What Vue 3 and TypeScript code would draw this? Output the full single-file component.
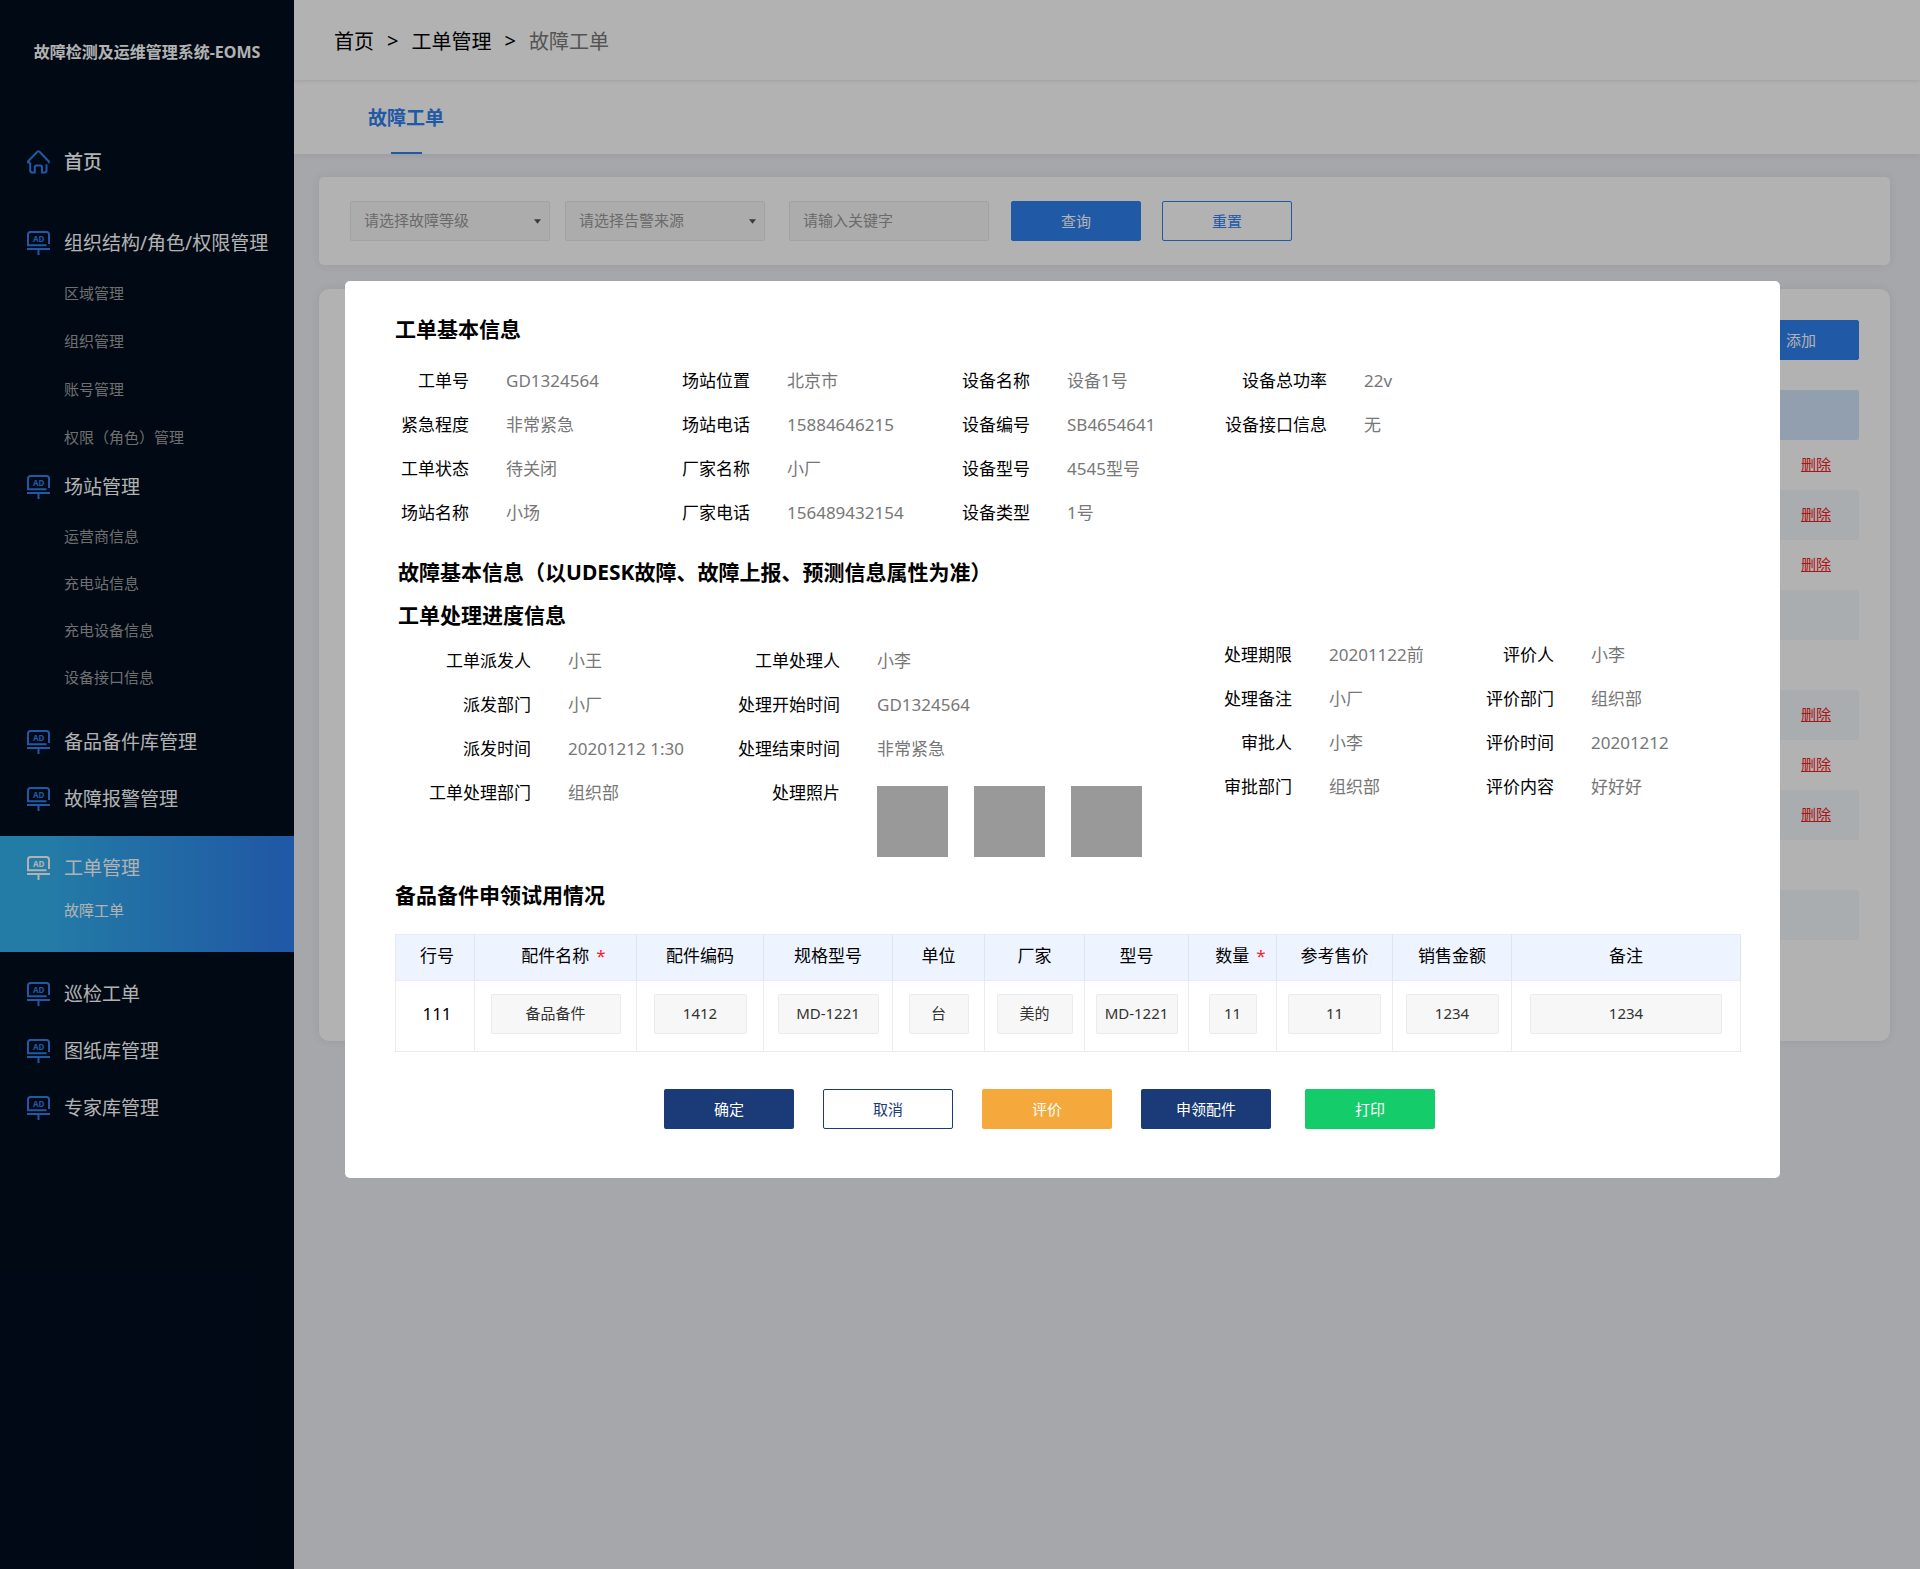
<script setup lang="ts">
import { ref } from 'vue'

interface NavGroup {
  title: string
  icon: 'home' | 'board'
  kind?: 'first' | 'tight' | 'active'
  children?: string[]
}

interface Field {
  label: string
  value?: string
  photos?: number
}

interface PartColumn {
  title: string
  width: number
  required?: boolean
  field?: number
  value: string
}

const navGroups: NavGroup[] = [
  { title: '首页', icon: 'home', kind: 'first' },
  { title: '组织结构/角色/权限管理', icon: 'board', children: ['区域管理', '组织管理', '账号管理', '权限（角色）管理'] },
  { title: '场站管理', icon: 'board', kind: 'tight', children: ['运营商信息', '充电站信息', '充电设备信息', '设备接口信息'] },
  { title: '备品备件库管理', icon: 'board' },
  { title: '故障报警管理', icon: 'board' },
  { title: '工单管理', icon: 'board', kind: 'active', children: ['故障工单'] },
  { title: '巡检工单', icon: 'board' },
  { title: '图纸库管理', icon: 'board' },
  { title: '专家库管理', icon: 'board' },
]

const basicInfo: Field[][] = [
  [
    { label: '工单号', value: 'GD1324564' },
    { label: '紧急程度', value: '非常紧急' },
    { label: '工单状态', value: '待关闭' },
    { label: '场站名称', value: '小场' },
  ],
  [
    { label: '场站位置', value: '北京市' },
    { label: '场站电话', value: '15884646215' },
    { label: '厂家名称', value: '小厂' },
    { label: '厂家电话', value: '156489432154' },
  ],
  [
    { label: '设备名称', value: '设备1号' },
    { label: '设备编号', value: 'SB4654641' },
    { label: '设备型号', value: '4545型号' },
    { label: '设备类型', value: '1号' },
  ],
  [
    { label: '设备总功率', value: '22v' },
    { label: '设备接口信息', value: '无' },
  ],
]

const progressInfo: Field[][] = [
  [
    { label: '工单派发人', value: '小王' },
    { label: '派发部门', value: '小厂' },
    { label: '派发时间', value: '20201212 1:30' },
    { label: '工单处理部门', value: '组织部' },
  ],
  [
    { label: '工单处理人', value: '小李' },
    { label: '处理开始时间', value: 'GD1324564' },
    { label: '处理结束时间', value: '非常紧急' },
    { label: '处理照片', photos: 3 },
  ],
  [
    { label: '处理期限', value: '20201122前' },
    { label: '处理备注', value: '小厂' },
    { label: '审批人', value: '小李' },
    { label: '审批部门', value: '组织部' },
  ],
  [
    { label: '评价人', value: '小李' },
    { label: '评价部门', value: '组织部' },
    { label: '评价时间', value: '20201212' },
    { label: '评价内容', value: '好好好' },
  ],
]

const parts = ref<PartColumn[]>([
  { title: '行号', width: 79, value: '111' },
  { title: '配件名称', width: 162, required: true, field: 130, value: '备品备件' },
  { title: '配件编码', width: 127, field: 93, value: '1412' },
  { title: '规格型号', width: 129, field: 101, value: 'MD-1221' },
  { title: '单位', width: 92, field: 60, value: '台' },
  { title: '厂家', width: 100, field: 76, value: '美的' },
  { title: '型号', width: 104, field: 82, value: 'MD-1221' },
  { title: '数量', width: 88, required: true, field: 48, value: '11' },
  { title: '参考售价', width: 116, field: 93, value: '11' },
  { title: '销售金额', width: 119, field: 93, value: '1234' },
  { title: '备注', width: 229, field: 192, value: '1234' },
])

const orderRows: boolean[] = [true, true, true, false, false, true, true, true, false, false]
const keyword = ref('')
</script>

<template>
  <div class="page">
    <aside class="sidebar">
      <h1 class="brand">故障检测及运维管理系统-EOMS</h1>
      <nav>
        <section v-for="group in navGroups" :key="group.title" class="group" :class="group.kind">
          <a href="#" class="item">
            <svg v-if="group.icon === 'home'" class="icon" viewBox="0 0 23 24">
              <path d="M3 12.6H1.6c-.7 0-.9-.9-.4-1.4L10.600 1.500c.5-.5 1.200-.5 1.700 0L21.600 11.200c.6.6.3 1.400-.4 1.400" />
              <path d="M3.200 12.500v8c0 1.300.7 2 2 2h2.600v-5.300c0-1 .6-1.600 1.600-1.600h4c1 0 1.600.6 1.600 1.600v5.300h2.500c1.300 0 2-.7 2-2v-6.300" />
            </svg>
            <svg v-else class="icon" viewBox="0 0 23 24">
              <path d="M22 13V3.500C22 2 21 1 19.500 1h-16C2 1 1 2 1 3.500V14.200H19.500" />
              <path d="M0 18H23M11.500 18V24" />
              <text x="11.700" y="10.600" text-anchor="middle">AD</text>
            </svg>
            <span>{{ group.title }}</span>
          </a>
          <ul v-if="group.children">
            <li v-for="child in group.children" :key="child"><a href="#">{{ child }}</a></li>
          </ul>
        </section>
      </nav>
    </aside>

    <main class="main">
      <header class="crumbs">
        <a href="#">首页</a><span>&gt;</span><a href="#">工单管理</a><span>&gt;</span><span class="here">故障工单</span>
      </header>
      <div class="tabs"><a href="#" class="tab">故障工单</a></div>

      <div class="content">
        <form class="filters" @submit.prevent>
          <div class="picker">
            <select aria-label="故障等级"><option>请选择故障等级</option></select>
            <svg viewBox="0 0 8 5"><path d="M0 0H8L4 5Z" /></svg>
          </div>
          <div class="picker">
            <select aria-label="告警来源"><option>请选择告警来源</option></select>
            <svg viewBox="0 0 8 5"><path d="M0 0H8L4 5Z" /></svg>
          </div>
          <input v-model="keyword" class="keyword" type="text" placeholder="请输入关键字" aria-label="关键字" />
          <button type="submit" class="btn blue query">查询</button>
          <button type="reset" class="btn blue-line">重置</button>
        </form>

        <section class="orders">
          <button type="button" class="btn blue add">添加</button>
          <table>
            <thead><tr><th></th></tr></thead>
            <tbody>
              <tr v-for="(removable, i) in orderRows" :key="i">
                <td><a v-if="removable" href="#">删除</a></td>
              </tr>
            </tbody>
          </table>
        </section>
      </div>
    </main>

    <div class="scrim">
      <div class="dialog" role="dialog" aria-modal="true">
        <h2>工单基本信息</h2>
        <div class="info basic">
          <dl v-for="(fields, i) in basicInfo" :key="i">
            <template v-for="field in fields" :key="field.label">
              <dt>{{ field.label }}</dt>
              <dd>{{ field.value }}</dd>
            </template>
          </dl>
        </div>

        <h2 class="fault">故障基本信息（以UDESK故障、故障上报、预测信息属性为准）</h2>
        <h2 class="progress-title">工单处理进度信息</h2>
        <div class="info progress">
          <dl v-for="(fields, i) in progressInfo" :key="i">
            <template v-for="field in fields" :key="field.label">
              <dt>{{ field.label }}</dt>
              <dd v-if="field.photos" class="photos"><i v-for="n in field.photos" :key="n"></i></dd>
              <dd v-else>{{ field.value }}</dd>
            </template>
          </dl>
        </div>

        <h2 class="parts-title">备品备件申领试用情况</h2>
        <table class="parts">
          <colgroup>
            <col v-for="col in parts" :key="col.title" :style="{ width: col.width + 'px' }" />
          </colgroup>
          <thead>
            <tr>
              <th v-for="col in parts" :key="col.title" scope="col" :class="{ required: col.required }">
                {{ col.title }}<em v-if="col.required">*</em>
              </th>
            </tr>
          </thead>
          <tbody>
            <tr>
              <td v-for="col in parts" :key="col.title">
                <input v-if="col.field" v-model="col.value" type="text" :aria-label="col.title" :style="{ width: col.field + 'px' }" />
                <template v-else>{{ col.value }}</template>
              </td>
            </tr>
          </tbody>
        </table>

        <div class="actions">
          <button type="button" class="btn navy">确定</button>
          <button type="button" class="btn navy-line">取消</button>
          <button type="button" class="btn orange">评价</button>
          <button type="button" class="btn navy">申领配件</button>
          <button type="button" class="btn green">打印</button>
        </div>
      </div>
    </div>
  </div>
</template>

<style>
body {
  margin: 0;
}
</style>

<style scoped>
.page,
.page button,
.page input,
.page select {
  font-family: 'Noto Sans', 'Noto Sans CJK SC', sans-serif;
}

.page * {
  box-sizing: border-box;
}

.page {
  position: relative;
  display: flex;
  min-height: 100vh;
  background: #eeeff4;
}

a {
  color: inherit;
  text-decoration: none;
}

h1,
h2,
ul,
dl,
dd {
  margin: 0;
  padding: 0;
}

/* sidebar */
.sidebar {
  flex: 0 0 294px;
  background: #000d1e;
  color: #fff;
}

.brand {
  padding-top: 40px;
  font-size: 16px;
  line-height: 24px;
  text-align: center;
  white-space: nowrap;
}

nav {
  padding-top: 61px;
}

.group {
  margin-top: 17px;
}

.group.first {
  margin-bottom: 41px;
  font-weight: 500;
}

.group.tight {
  margin-top: 6px;
}

.group.active {
  height: 116px;
  margin-bottom: 22px;
  padding-top: 12px;
  background: linear-gradient(90deg, #33b2ee 15%, #2f80ed 95%);
}

.item {
  display: flex;
  align-items: center;
  gap: 14px;
  padding-left: 27px;
  font-size: 19px;
  line-height: 40px;
  white-space: nowrap;
}

.icon {
  width: 23px;
  height: 24px;
  fill: none;
  stroke: #2f80ed;
  stroke-width: 2;
}

.icon text {
  fill: #2f80ed;
  stroke: none;
  font-size: 8px;
  font-weight: 700;
}

.active .icon {
  stroke: #fff;
}

.active .icon text {
  fill: #fff;
}

.group ul {
  padding: 6px 0 0 64px;
  list-style: none;
  color: #a0a0a0;
  font-size: 15px;
  line-height: 48px;
}

.group.tight ul {
  padding-bottom: 4px;
  line-height: 47px;
}

.group.first + .group {
  margin-top: 0;
}

.group.active + .group {
  margin-top: 0;
}

.group.active ul {
  padding-top: 0;
  color: #fff;
  line-height: 44px;
}

/* page behind the dialog */
.main {
  flex: 1;
  min-width: 0;
}

.crumbs {
  display: flex;
  align-items: center;
  gap: 13px;
  height: 80px;
  padding: 0 40px 0 40px;
  background: #fff;
  box-shadow: 0 1px 4px rgba(0, 0, 0, 0.1);
  position: relative;
  font-size: 20px;
}

.here {
  color: #777;
}

.tabs {
  display: flex;
  height: 74px;
  padding-left: 74px;
  background: #fff;
  box-shadow: 0 2px 6px rgba(0, 0, 0, 0.06);
}

.tab {
  display: flex;
  flex-direction: column;
  align-items: center;
  justify-content: space-between;
  padding-top: 24px;
  color: #2f80ed;
  font-size: 19px;
  font-weight: 700;
  line-height: 28px;
}

.tab::after {
  width: 31px;
  height: 2px;
  background: #2f80ed;
  content: '';
}

.content {
  padding: 23px 30px 0 25px;
}

.filters {
  display: flex;
  align-items: center;
  height: 88px;
  padding-left: 31px;
  border-radius: 5px;
  background: #fff;
  box-shadow: 0 0 10px rgba(0, 0, 40, 0.07);
}

.picker {
  position: relative;
  width: 200px;
  margin-right: 15px;
}

.picker svg {
  position: absolute;
  top: 18px;
  right: 9px;
  width: 7px;
  height: 5px;
  fill: #555;
  pointer-events: none;
}

select,
.keyword {
  width: 200px;
  height: 40px;
  padding: 0 13px 2px;
  border: 1px solid #e8e8e8;
  border-radius: 2px;
  background: #f7f7f7;
  color: #999;
  font-size: 15px;
  appearance: none;
}

select {
  display: block;
}

.keyword {
  margin-left: 9px;
}

.keyword::placeholder {
  color: #999;
}

.btn {
  width: 130px;
  height: 40px;
  padding: 0 0 2px;
  border: 1px solid transparent;
  border-radius: 2px;
  color: #fff;
  font-size: 15px;
}

.blue {
  background: #2f80ed;
  border-color: #2f80ed;
}

.blue-line {
  margin-left: 21px;
  background: #fff;
  border-color: #2f80ed;
  color: #2f80ed;
}

.query {
  margin-left: 22px;
}

.orders {
  margin-top: 24px;
  padding: 31px 31px 101px;
  border-radius: 10px;
  background: #fff;
  box-shadow: 0 0 10px rgba(0, 0, 40, 0.07);
}

.add {
  display: block;
  margin: 0 0 30px auto;
  padding-left: 14px;
}

.orders table {
  width: 100%;
  border-spacing: 0;
}

.orders th,
.orders td {
  height: 50px;
  padding: 0 28px 4px 0;
  border-radius: 2px;
  text-align: right;
  font-size: 15px;
}

.orders th {
  background: #d2e4fb;
}

.orders tr:nth-child(even) td {
  background: #f2f8fc;
}

.orders td a {
  color: #f42020;
  text-decoration: underline;
}

/* dialog */
.scrim {
  position: absolute;
  inset: 0;
  padding: 281px 140px 0 345px;
  background: rgba(0, 0, 0, 0.3);
}

.dialog {
  padding: 34px 39px 49px 50px;
  border-radius: 5px;
  background: #fff;
  color: #000;
}

h2 {
  font-size: 21px;
  font-weight: 700;
  line-height: 28px;
}

.fault {
  margin-top: 23px;
  padding-left: 3px;
}

.progress-title {
  margin-top: 15px;
  padding-left: 3px;
}

.parts-title {
  margin-top: 24px;
}

.info {
  display: grid;
  font-size: 17px;
  line-height: 44px;
  white-space: nowrap;
}

dl {
  display: grid;
  grid-template-columns: var(--label) 1fr;
  column-gap: 37px;
  align-content: start;
}

dt {
  text-align: right;
}

dd {
  color: #777;
}

.basic {
  --label: 80px;
  grid-template-columns: 275fr 280fr 256fr 535fr;
  margin-top: 16px;
}

.basic dl:first-child {
  --label: 74px;
}

.basic dl:last-child {
  --label: 121px;
}

.progress {
  --label: 136px;
  grid-template-columns: 309fr 487fr 290fr 260fr;
  margin-top: 4px;
}

.progress dl:nth-child(-n + 2) {
  padding-top: 6px;
}

.progress dl:nth-child(3) {
  --label: 101px;
}

.progress dl:nth-child(4) {
  --label: 73px;
}

.photos {
  display: flex;
  gap: 26px;
  padding-top: 15px;
}

.photos i {
  width: 71px;
  height: 71px;
  background: #999;
}

.parts {
  width: 100%;
  margin-top: 25px;
  border-collapse: collapse;
  table-layout: fixed;
  text-align: center;
}

.parts th,
.parts td {
  padding: 0;
  border: 1px solid #e9ebee;
  font-size: 17px;
  font-weight: 400;
}

.parts th {
  height: 46px;
  padding-bottom: 6px;
  border-right-color: #dce6f0;
  background: #eef4ff;
}

.parts th.required {
  padding-left: 16px;
}

.parts th:first-child,
.parts td:first-child {
  padding-left: 4px;
}

.parts em {
  margin-left: 7px;
  color: #f5222d;
  font-style: normal;
}

.parts td {
  height: 71px;
  padding-bottom: 5px;
}

.parts input {
  display: block;
  max-width: 100%;
  height: 40px;
  margin: 0 auto;
  padding: 0 0 2px;
  border: 1px solid #e9ebee;
  border-radius: 2px;
  background: #f7f7f7;
  color: #333;
  font-size: 15px;
  text-align: center;
}

.actions {
  display: flex;
  justify-content: center;
  gap: 29px;
  margin-top: 37px;
  padding-right: 37px;
}

.actions .btn:last-child {
  margin-left: 5px;
}

.navy {
  background: #1a3a78;
}

.navy-line {
  border-color: #1a3a78;
  background: #fff;
  color: #1a3a78;
}

.orange {
  background: #f5a83b;
}

.green {
  background: #15cc6b;
}
</style>
